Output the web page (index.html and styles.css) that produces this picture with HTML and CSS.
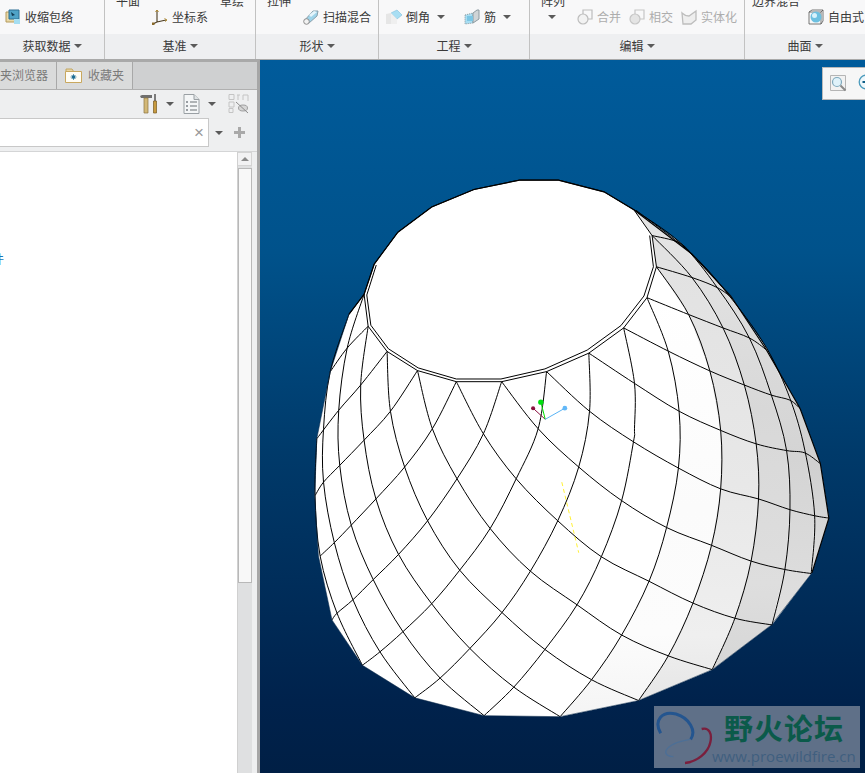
FILE: index.html
```html
<!DOCTYPE html>
<html lang="zh">
<head>
<meta charset="utf-8">
<title>Creo</title>
<link rel="stylesheet" href="styles.css">
</head>
<body>
<div class="app">
  <header class="ribbon">
    <section class="group g1">
      <div class="body">
        <div class="main">
          <svg class="ic" viewBox="0 0 16 16"><path d="M1 3h9v10H1z" fill="#e9d9a8" stroke="#b59a5c"/><path d="M4 1h10v9H4z" fill="#4fa3c7" stroke="#2d6f94"/><path d="M6 3l4 3-3 1z" fill="#123a52"/><path d="M9 10h6v5H9z" fill="#a5def2"/></svg>
          <span>收缩包络</span>
        </div>
      </div>
      <div class="label">获取数据<i class="caret"></i></div>
    </section>
    <section class="group g2">
      <div class="body">
        <div class="tops"><span>平面</span><span>草绘</span></div>
        <div class="main">
          <svg class="ic" viewBox="0 0 16 16" fill="none"><path d="M5 1v12L1 15M5 13l9-2" stroke="#4a3a1e" stroke-width="1.1"/><path d="M3.500 3L5 1l1.500 2M12.500 9.500L15 11l-2 1.500" stroke="#b08a30"/><rect x="0" y="13.500" width="2.500" height="2.500" fill="#8a6a2a"/></svg>
          <span>坐标系</span>
        </div>
      </div>
      <div class="label">基准<i class="caret"></i></div>
    </section>
    <section class="group g3">
      <div class="body">
        <div class="tops"><span>拉伸</span></div>
        <div class="main">
          <svg class="ic" viewBox="0 0 16 16"><path d="M1 12L10 2h5l-1 5-8 7z" fill="#9fd4ea" stroke="#8aa0ac"/><path d="M6 6l5-4 3 1-6 5z" fill="#e4f4fb"/><circle cx="3.500" cy="12.500" r="2.800" fill="#f2f2f2" stroke="#8c8c8c"/></svg>
          <span>扫描混合</span>
        </div>
      </div>
      <div class="label">形状<i class="caret"></i></div>
    </section>
    <section class="group g4">
      <div class="body">
        <div class="main">
          <svg class="ic" viewBox="0 0 16 16"><path d="M0 5l5-1v11H0z" fill="#e6e6e6"/><path d="M5 4l6-3 5 5-5 4z" fill="#a8def3" stroke="#7fc0dc" stroke-width=".6"/><path d="M5 15V4l6 6v5z" fill="#efefef"/></svg>
          <span>倒角</span><i class="caret after-text"></i>
          <svg class="ic rib" viewBox="0 0 16 16"><path d="M1 6l8-2v10l-8 1z" fill="#a8def3" stroke="#8c9aa0" stroke-dasharray="1 1"/><path d="M9 4l4-3h2v9l-6 4z" fill="#cfd4d6" stroke="#8c9aa0"/><path d="M3 7h6v5H3z" fill="#7cc6e4"/></svg>
          <span>筋</span><i class="caret after-rib"></i>
        </div>
      </div>
      <div class="label">工程<i class="caret"></i></div>
    </section>
    <section class="group g5">
      <div class="body">
        <div class="tops"><span>阵列</span></div>
        <div class="main">
          <i class="caret lone"></i>
          <svg class="ic off" viewBox="0 0 16 16" fill="none" stroke="#bdbdbd" stroke-width="1.200"><path d="M6 1h9v9H6z"/><circle cx="6" cy="10" r="5" fill="#f2f2f2"/></svg>
          <span class="dim">合并</span>
          <svg class="ic off next" viewBox="0 0 16 16" fill="none" stroke="#c6c6c6" stroke-width="1.200"><path d="M6 1h9v9H6z"/><circle cx="6" cy="10" r="5" fill="#e4e4e4"/></svg>
          <span class="dim">相交</span>
          <svg class="ic off next" viewBox="0 0 16 16" fill="none" stroke="#bdbdbd" stroke-width="1.300"><path d="M1 4c3 3 7 3 7 3l7-5v9l-5 4H2z" fill="#eeeeee"/></svg>
          <span class="dim">实体化</span>
        </div>
      </div>
      <div class="label">编辑<i class="caret"></i></div>
    </section>
    <section class="group g6">
      <div class="body">
        <div class="tops"><span>边界混合</span></div>
        <div class="main">
          <svg class="ic" viewBox="0 0 16 16"><path d="M1 3h12v12H1z" fill="none" stroke="#555" stroke-width=".8"/><path d="M1 3l3-2h11l-2 2M15 1v11l-2 3" fill="none" stroke="#555" stroke-width=".8"/><circle cx="8" cy="8" r="5.500" fill="#6dc0e0"/><circle cx="6.500" cy="6.500" r="2.500" fill="#d8f2fb"/></svg>
          <span>自由式</span>
        </div>
      </div>
      <div class="label">曲面<i class="caret"></i></div>
    </section>
  </header>

  <div class="work">
    <aside class="panel">
      <nav class="tabs">
        <div class="tab first"><span>夹浏览器</span></div>
        <div class="tab second">
          <svg class="ic-tab" viewBox="0 0 17 17"><path d="M1 5V2h6l2 3" fill="#e9d6a4" stroke="#c2a664"/><path d="M.5 4.500h16v11H.5z" fill="#fffdf5" stroke="#c9a85f"/><circle cx="8.500" cy="10" r="1.700" fill="#1f6f94"/><path d="M8.500 7v6M5.500 10h6M6.500 8l4 4M10.500 8l-4 4" stroke="#1f6f94" stroke-width=".7"/></svg>
          <span>收藏夹</span>
        </div>
      </nav>
      <div class="tools">
        <svg class="ic-tool" viewBox="0 0 18 20"><path d="M0 2l2-1h10v3H1z" fill="#6f6f6f"/><path d="M4 4h4v15H4z" fill="#d3b877" stroke="#8a7340" stroke-width=".7"/><path d="M15 0v7" stroke="#555" stroke-width="1.500"/><path d="M13.500 7h3v12h-3z" fill="#c79a3f" stroke="#77591f" stroke-width=".7"/></svg>
        <i class="caret t1"></i>
        <svg class="ic-tool t2" viewBox="0 0 17 20"><path d="M1 .5h10l5 5v14H1z" fill="#f4f6f7" stroke="#9aa0a4"/><path d="M11 .5v5h5" fill="#dfe3e5" stroke="#9aa0a4"/><path d="M7 8h7M7 12h7M7 16h7" stroke="#6a7075"/><path d="M3 8h2M3 12h2M3 16h2" stroke="#7a8086" stroke-width="1.500"/></svg>
        <i class="caret t1"></i>
        <svg class="ic-tool t3" viewBox="0 0 21 20" fill="none" stroke="#c4c4c4"><path d="M1 .5h5v5H1zM1 8h5v5H1zM1 14.500h4v4H1zM9 1h3M15 1h5v6M10 1v5M15 1v5"/><ellipse cx="15" cy="14" rx="4.500" ry="3" fill="#d6d6d6" stroke="#a0a0a0"/><path d="M8 8l12 11" stroke="#8c8c8c"/></svg>
      </div>
      <div class="search">
        <div class="input"><span class="x">×</span></div>
        <i class="caret s1"></i>
        <span class="plus"></span>
      </div>
      <div class="tree-wrap">
        <div class="tree"><p class="tree-item">件</p></div>
        <div class="scroll">
          <div class="btn"><i class="up"></i></div>
          <div class="thumb"></div>
        </div>
      </div>
    </aside>

    <main class="view">
      <svg class="scene" viewBox="260 60 605 713">
        <defs>
          <linearGradient id="sky" x1="0" y1="0" x2="0" y2="1"><stop offset="0" stop-color="#005b9b"/><stop offset=".27" stop-color="#00528b"/><stop offset=".55" stop-color="#003a6a"/><stop offset=".9" stop-color="#00224c"/><stop offset="1" stop-color="#001f45"/></linearGradient>
          <linearGradient id="ab" gradientUnits="userSpaceOnUse" x1="0" y1="380" x2="0" y2="1630"><stop offset="0" stop-color="#fff"/><stop offset=".5" stop-color="#fbfbfb"/><stop offset=".8" stop-color="#fcfcfc"/><stop offset="1" stop-color="#f4f4f4"/></linearGradient>
          <linearGradient id="bc" gradientUnits="userSpaceOnUse" x1="0" y1="290" x2="0" y2="1580"><stop offset="0" stop-color="#e2e2e2"/><stop offset=".5" stop-color="#e8e8e8"/><stop offset=".85" stop-color="#efefef"/><stop offset="1" stop-color="#e6e6e6"/></linearGradient>
          <linearGradient id="cd" gradientUnits="userSpaceOnUse" x1="0" y1="195" x2="0" y2="1490"><stop offset="0" stop-color="#e4e4e4"/><stop offset=".4" stop-color="#d8d8d8"/><stop offset=".8" stop-color="#dedede"/><stop offset="1" stop-color="#d6d6d6"/></linearGradient>
          <linearGradient id="de" gradientUnits="userSpaceOnUse" x1="0" y1="120" x2="0" y2="1354"><stop offset="0" stop-color="#e2e2e2"/><stop offset=".6" stop-color="#d4d4d4"/><stop offset="1" stop-color="#e0e0e0"/></linearGradient>
          <linearGradient id="ef" gradientUnits="userSpaceOnUse" x1="0" y1="120" x2="0" y2="1201"><stop offset="0" stop-color="#e6e6e6"/><stop offset=".7" stop-color="#d0d0d0"/><stop offset="1" stop-color="#dcdcdc"/></linearGradient>
        </defs>
        <rect class="sky" x="260" y="60" width="605" height="713"/>
        <g transform="translate(310 170) scale(.338 .336)">
          <polygon class="solid" points="160,370 190,280 260,185 360,110 485,58 620,30 735,30 870,65 958,118 1130,250 1245,375 1350,535 1450,710 1510,874 1535,1036 1485,1199 1365,1354 1190,1487 972,1579 740,1627 515,1624 310,1571 155,1474 65,1339 25,1149 14,969 20,800 60,600 115,430"/>
          <polygon fill="url(#ab)" points="997,380 1060,540 1092,718 1090,887 1055,1064 1003,1224 922,1384 833,1517 740,1627 972,1579 1060,1446 1133,1289 1188,1117 1215,949 1215,775 1183,598 1120,430 1025,288"/>
          <polygon fill="url(#bc)" points="1025,288 1120,430 1183,598 1215,775 1215,949 1188,1117 1133,1289 1060,1446 972,1579 1190,1487 1257,1334 1305,1164 1327,979 1320,815 1285,640 1222,470 1130,320 1012,195"/>
          <polygon fill="url(#cd)" points="1012,195 1130,320 1222,470 1285,640 1320,815 1327,979 1305,1164 1257,1334 1190,1487 1365,1354 1405,1189 1420,1011 1410,835 1365,670 1300,500 1205,350 1095,216 958,118"/>
          <polygon fill="url(#de)" points="958,118 1095,216 1205,350 1300,500 1365,670 1410,835 1420,1011 1405,1189 1367,1354 1483,1201 1493,1029 1464,834 1420,680 1352,532 1248,384 1130,250"/>
          <polygon fill="url(#ef)" points="1130,250 1245,375 1350,535 1450,710 1510,874 1535,1036 1485,1199 1493,1029 1464,834 1420,680 1352,532 1248,384"/>
          <g class="wire curves">
            <polyline points="997,380 1120,430 1222,470 1300,500 1350,535"/>
            <polyline points="928,470 1062,540 1183,598 1285,640 1365,670 1420,685 1450,710"/>
            <polyline points="825,545 960,635 1092,718 1215,775 1320,815 1410,835 1464,842 1510,874"/>
            <polyline points="700,600 827,718 957,809 1090,887 1215,949 1327,979 1420,1011 1493,1029 1535,1036"/>
            <polyline points="567,630 675,770 795,884 922,984 1055,1064 1188,1117 1305,1164 1405,1189 1483,1201"/>
            <polyline points="433,630 513,785 610,919 733,1044 862,1151 1003,1224 1133,1289 1257,1334 1367,1354"/>
            <polyline points="318,597 362,770 435,919 533,1067 652,1194 790,1294 922,1384 1060,1446 1190,1487"/>
            <polyline points="228,540 238,718 280,884 348,1044 443,1191 568,1317 695,1427 833,1517 972,1579"/>
            <polyline points="172,465 150,640 160,804 195,979 262,1144 360,1291 473,1424 603,1539 740,1627"/>
            <polyline points="160,370 110,530 85,715 88,879 122,1057 187,1219 275,1374 385,1512 515,1624"/>
            <polyline points="115,430 60,600 40,770 40,929 72,1109 127,1279 207,1434 310,1571"/>
            <polyline points="20,800 15,969 30,1149 80,1319 155,1474"/>
            <polyline points="1012,195 1090,215 1130,250"/>
            <polyline points="1025,288 1130,320 1205,350 1248,380"/>
            <polyline points="997,380 1060,540 1092,718 1090,887 1055,1064 1003,1224 922,1384 833,1517 740,1627"/>
            <polyline points="1025,288 1120,430 1183,598 1215,775 1215,949 1188,1117 1133,1289 1060,1446 972,1579"/>
            <polyline points="1012,195 1130,320 1222,470 1285,640 1320,815 1327,979 1305,1164 1257,1334 1190,1487"/>
            <polyline points="958,118 1095,216 1205,350 1300,500 1365,670 1410,835 1420,1011 1405,1189 1367,1354"/>
            <polyline points="965,120 1130,250 1248,384 1352,532 1420,680 1464,834 1493,1029 1483,1201"/>
            <polyline points="928,470 960,635 960,770 957,809 922,984 862,1151 790,1294 695,1427 603,1539 515,1624"/>
            <polyline points="825,545 827,718 795,884 733,1044 652,1194 568,1317 473,1424 385,1512 310,1571"/>
            <polyline points="700,600 675,770 610,919 533,1067 443,1191 360,1291 275,1374 207,1434 155,1474"/>
            <polyline points="567,630 513,785 435,919 348,1044 262,1144 187,1219 127,1279 80,1319 65,1339"/>
            <polyline points="433,630 362,770 280,884 195,979 122,1057 72,1109 30,1149"/>
            <polyline points="318,597 238,718 160,804 88,879 40,929 15,969"/>
            <polyline points="228,540 150,640 85,715 20,800"/>
            <polyline points="172,465 110,530 60,600"/>
            <polyline points="160,370 115,430"/>
          </g>
          <g class="wire">
            <polyline points="1005,195 1016,288 988,375 920,463 820,536 695,592 565,622 433,622 320,589 232,532 180,462 168,372 196,283"/>
            <polygon points="620,30 735,30 870,65 958,118 1012,195 1025,288 997,380 928,470 825,545 700,600 567,630 433,630 318,597 228,540 172,465 160,370 190,280 260,185 360,110 485,58"/>
          </g>
          <polyline class="edge" points="115,430 160,370 190,280 260,185 360,110 485,58 620,30 735,30 870,65 958,118 1130,250 1245,375 1350,535 1450,710 1510,874 1535,1036 1485,1199"/>
          <polyline class="edge soft" points="1485,1199 1365,1354 1190,1487 972,1579 740,1627 515,1624 310,1571 155,1474 65,1339 25,1149 14,969 20,800 60,600 115,430"/>
          <path class="ax red" d="M696 742L660 709"/><circle class="red-dot" cx="660" cy="709" r="6"/>
          <path class="ax green" d="M696 742L683 691"/><circle class="green-dot" cx="683" cy="691" r="8"/>
          <path class="ax blue" d="M696 742L754 709"/><circle class="blue-dot" cx="754" cy="709" r="7"/>
          <path class="ax yellow" d="M745 929L795 1139"/>
        </g>
      </svg>
      <div class="viewbar">
        <svg class="vb-zoom" viewBox="0 0 17 17" fill="none"><path d="M.5.500h15v15H.5z" fill="#f2f2f2" stroke="#b5b5b5"/><circle cx="7" cy="7" r="4.500" fill="#dff2fa" stroke="#7fa9bd" stroke-width="1.200"/><path d="M10.500 10.500l5 5" stroke="#8a8a8a" stroke-width="2"/></svg>
        <svg class="vb-plus" viewBox="0 0 16 16" fill="none"><circle cx="8" cy="8" r="6.800" fill="#eef7fb" stroke="#4c9bbd" stroke-width="1.300"/><path d="M4.500 8h7M8 4.500v7" stroke="#0e5f88" stroke-width="2"/></svg>
      </div>
      <div class="mark">
        <svg class="mark-logo" viewBox="42 48 210 186" fill="none">
          <path d="M62 130C40 90 66 62 108 72c40 12 62 50 44 76" stroke="#24558f" stroke-width="9"/>
          <path d="M150 148c-24 4-62 14-72 34-4 12 8 18 22 18" stroke="#4d6f96" stroke-width="4"/>
          <path d="M185 117c22-6 32 14 26 40-6 30-38 58-76 62" stroke="#7a1f3d" stroke-width="7"/>
        </svg>
        <div class="mark-text">
          <div class="mark-cn">野火论坛</div>
          <div class="mark-url">www.proewildfire.cn</div>
        </div>
      </div>
    </main>
  </div>
</div>
<script src="script.js"></script>
</body>
</html>
```
FILE: styles.css
```css
* { box-sizing: border-box; }
html, body { margin: 0; height: 100%; overflow: hidden; }
body { font-family: "Noto Sans CJK SC", "Noto Sans", sans-serif; font-size: 12px; color: #3a3a3a; }
.app { width: 865px; height: 773px; display: flex; flex-direction: column; overflow: hidden; }
i { display: block; font-style: normal; }

/* ribbon */
.ribbon { height: 60px; flex: none; display: flex; background: #f8f8f9; border-bottom: 1px solid #a9a9a9; }
.group { display: flex; flex-direction: column; border-right: 1px solid #c2c2c2; flex: none; }
.g1 { width: 105px; }
.g2 { width: 151px; }
.g3 { width: 123px; }
.g4 { width: 151px; }
.g5 { width: 215px; }
.g6 { flex: 1; border-right: 0; overflow: hidden; }
.body { height: 34px; overflow: hidden; }
.tops { height: 8px; display: flex; overflow: hidden; align-items: flex-end; line-height: 14px; }
.tops span { flex: none; white-space: nowrap; }
.main { height: 20px; margin-top: -1px; display: flex; align-items: center; line-height: 16px; white-space: nowrap; }
.g1 .body { padding-top: 8px; }
.g4 .body { padding-top: 8px; }
.g2 .tops { padding-left: 11px; gap: 80px; }
.g3 .tops, .g5 .tops { padding-left: 11px; }
.g6 .tops { padding-left: 7px; }
.g1 .main { padding-left: 5px; }
.g2 .main, .g3 .main { padding-left: 47px; }
.g4 .main { padding-left: 7px; }
.g5 .main { padding-left: 18px; }
.g6 .main { padding-left: 63px; }
.ic { width: 16px; height: 16px; flex: none; margin-right: 4px; }
.rib { margin-left: 19px; }
.off { margin-left: 21px; }
.off.next { margin-left: 8px; }
.dim { color: #adadad; }
.label { height: 25px; padding-bottom: 2px; background: #eeeff1; display: flex; align-items: center; justify-content: center; gap: 3px; line-height: 16px; }
.caret { width: 0; height: 0; border-left: 4px solid transparent; border-right: 4px solid transparent; border-top: 4px solid #5a5a5a; flex: none; }
.after-text { margin-left: 7px; }
.after-rib { margin-left: 7px; }

/* work area */
.work { flex: 1; display: flex; min-height: 0; }
.panel { width: 260px; flex: none; display: flex; flex-direction: column; background: #eeeff0; border-top: 2px solid #a9a9a9; border-right: 3px solid #a6a6a6; }
.tabs { height: 28px; flex: none; display: flex; background: #cfd0d1; border-bottom: 1px solid #b0b0b0; }
.tab { display: flex; align-items: center; padding-bottom: 3px; background: #dadbdb; border-right: 1px solid #a8a8a8; color: #7a7a7a; white-space: nowrap; overflow: hidden; }
.tab.first { width: 57px; justify-content: flex-end; padding-right: 8px; }
.tab.second { width: 76px; padding-left: 8px; gap: 6px; }
.ic-tab { width: 17px; height: 17px; flex: none; margin-top: 3px; }
.tools { height: 28px; flex: none; display: flex; align-items: center; padding-left: 140px; }
.ic-tool { width: 18px; height: 20px; flex: none; }
.t1 { margin-left: 8px; }
.t2 { margin-left: 9px; width: 17px; }
.t3 { margin-left: 12px; width: 21px; }
.search { height: 29px; flex: none; display: flex; align-items: center; }
.input { width: 209px; height: 29px; background: #fff; border: 1px solid #c8c8c8; border-left: 0; display: flex; align-items: center; justify-content: flex-end; padding-right: 4px; }
.x { color: #999; font-family: "Liberation Sans", sans-serif; font-size: 17px; line-height: 1; }
.s1 { margin-left: 6px; }
.plus { width: 11px; height: 11px; margin-left: 11px; background: linear-gradient(#a9a9a9, #a9a9a9) center / 11px 3px no-repeat, linear-gradient(#a9a9a9, #a9a9a9) center / 3px 11px no-repeat; }
.tree-wrap { flex: 1; display: flex; min-height: 0; margin-top: 4px; border-top: 1px solid #d4d5d6; padding-right: 5px; }
.tree { flex: 1; background: #fff; overflow: hidden; padding-top: 99px; }
.tree-item { margin: 0 0 0 -8px; color: #1474b8; line-height: 16px; }
.scroll { width: 15px; flex: none; background: #dfe0e1; border-left: 1px solid #d0d0d0; display: flex; flex-direction: column; }
.btn { height: 14px; background: #f2f2f3; border: 1px solid #d4d4d4; border-left: 0; display: flex; align-items: center; justify-content: center; }
.up { width: 0; height: 0; border-left: 4px solid transparent; border-right: 4px solid transparent; border-bottom: 4px solid #8a8a8a; }
.thumb { height: 415px; margin-top: 2px; background: #f8f8f8; border: 1px solid #b8b8b8; }

/* view */
.view { flex: 1; position: relative; overflow: hidden; }
.scene { display: block; width: 605px; height: 713px; }
.sky { fill: url(#sky); }
.solid { fill: #fff; }
.wire polyline, .wire polygon, .wire path { fill: none; stroke: #000; stroke-width: 1; vector-effect: non-scaling-stroke; stroke-linejoin: round; }
.edge { fill: none; stroke: #000; stroke-width: 1.200; vector-effect: non-scaling-stroke; }
.edge.soft { stroke: #0a2a4a; stroke-width: .8; opacity: .7; }
.ax { fill: none; stroke-width: 1; vector-effect: non-scaling-stroke; }
.red { stroke: #8a1040; }
.green { stroke: #00e000; }
.blue { stroke: #5ab4f5; }
.yellow { stroke: #ffee00; stroke-width: .8; stroke-dasharray: 4 3; }
.red-dot { fill: #8a1040; }
.green-dot { fill: #00e010; }
.blue-dot { fill: #62b8f8; }
.viewbar { position: absolute; left: 562px; top: 7px; width: 50px; height: 33px; background: #f6f6f6; border: 1px solid #b9b9b9; display: flex; align-items: center; padding-left: 7px; gap: 11px; }
.vb-zoom { width: 17px; height: 17px; flex: none; }
.vb-plus { width: 16px; height: 16px; flex: none; margin-top: -3px; }
.mark { position: absolute; left: 394px; top: 646px; width: 206px; height: 62px; background: #5f7088; display: flex; overflow: hidden; }
.mark-logo { width: 70px; height: 62px; flex: none; }
.mark-text { display: flex; flex-direction: column; white-space: nowrap; padding-top: 6px; }
.mark-cn { font-weight: 700; font-size: 29px; line-height: 30px; color: #0b5a4a; letter-spacing: 1px; }
.mark-url { font-family: "Open Sans", "Liberation Sans", sans-serif; font-size: 15px; line-height: 20px; color: #3f5f7f; margin: 4px 0 0 -12px; }
```
FILE: script.js
```js
// Round the wireframe polylines into the smooth curves of the shaded model.
document.querySelectorAll('.curves polyline').forEach(function (line) {
  var p = line.getAttribute('points').trim().split(/\s+/).map(function (s) {
    return s.split(',').map(Number);
  });
  var d = 'M' + p[0].join(' ');
  for (var i = 0; i < p.length - 1; i++) {
    var a = p[Math.max(i - 1, 0)], b = p[i], c = p[i + 1], e = p[Math.min(i + 2, p.length - 1)];
    d += 'C' + (b[0] + (c[0] - a[0]) / 6) + ' ' + (b[1] + (c[1] - a[1]) / 6) + ' ' +
      (c[0] - (e[0] - b[0]) / 6) + ' ' + (c[1] - (e[1] - b[1]) / 6) + ' ' + c.join(' ');
  }
  var path = document.createElementNS('http://www.w3.org/2000/svg', 'path');
  path.setAttribute('d', d);
  line.replaceWith(path);
});
```
